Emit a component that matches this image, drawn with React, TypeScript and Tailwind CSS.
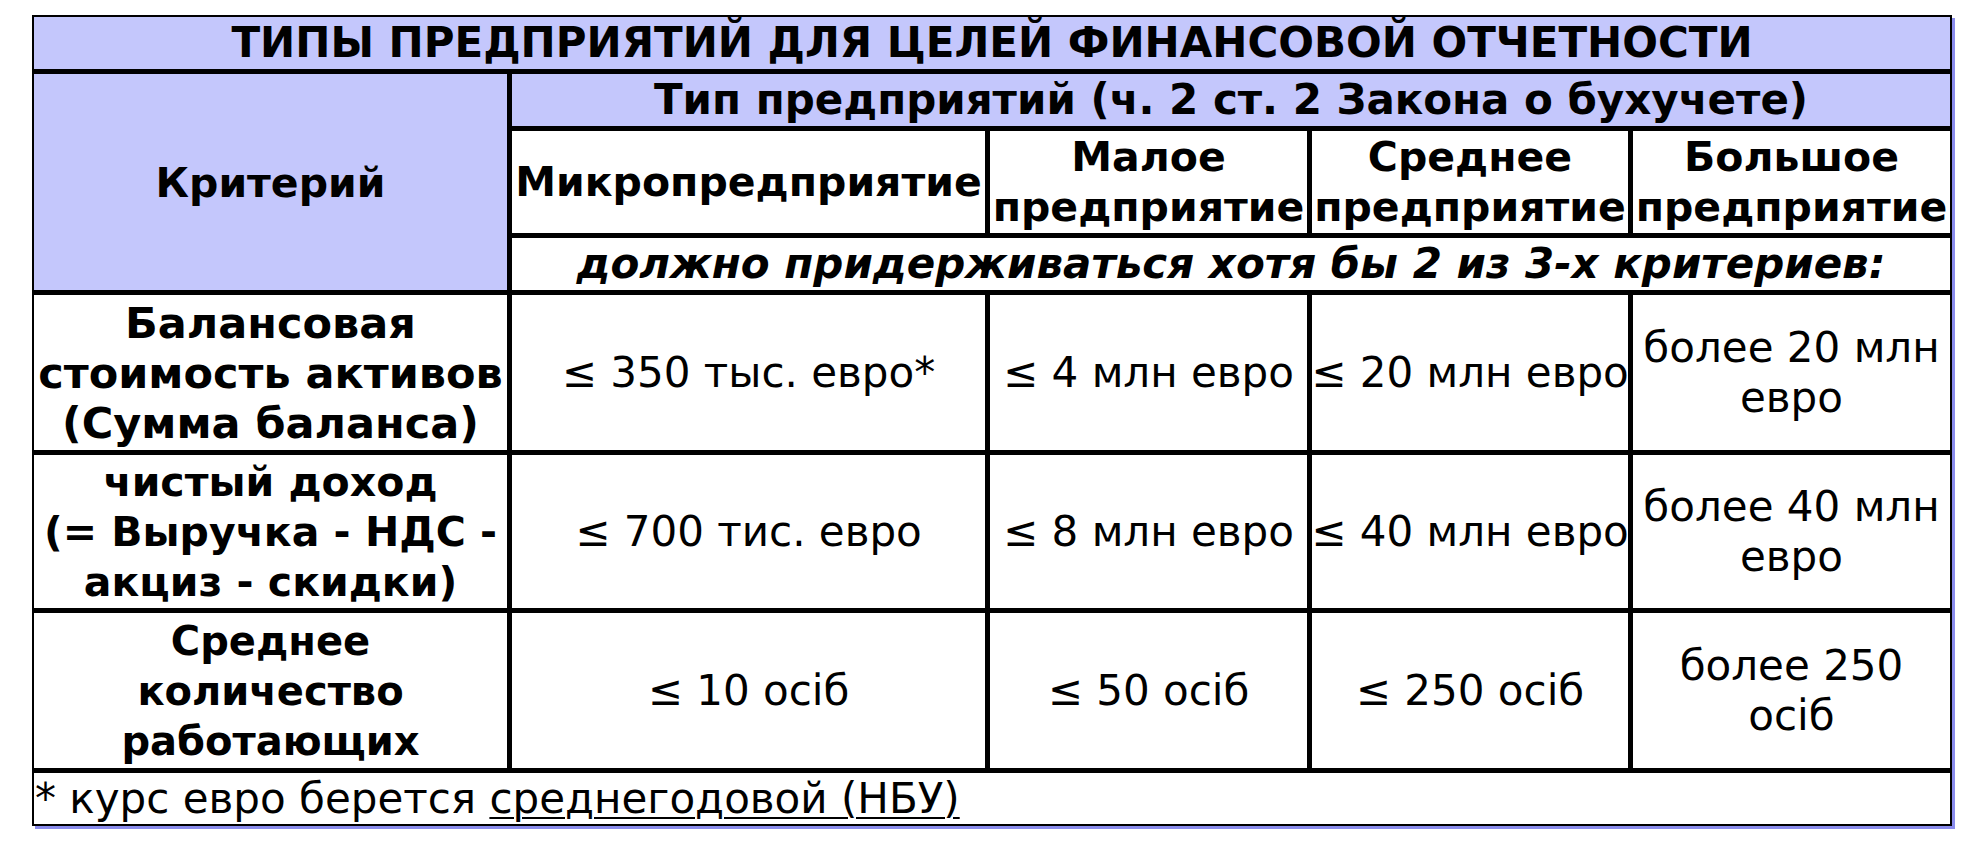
const cell = 'flex items-center justify-center text-center'
const head = 'bg-[#c4c7fc] font-bold'

const rows = [
  {
    size: 'text-[43px]',
    label: ['Балансовая', 'стоимость активов', '(Сумма баланса)'],
    values: [['≤ 350 тыс. евро*'], ['≤ 4 млн евро'], ['≤ 20 млн евро'], ['более 20 млн', 'евро']],
  },
  {
    size: 'text-[41px]',
    label: ['чистый доход', '(= Выручка - НДС -', 'акциз - скидки)'],
    values: [['≤ 700 тис. евро'], ['≤ 8 млн евро'], ['≤ 40 млн евро'], ['более 40 млн', 'евро']],
  },
  {
    size: 'text-[40px]',
    label: ['Среднее', 'количество', 'работающих'],
    values: [['≤ 10 осіб'], ['≤ 50 осіб'], ['≤ 250 осіб'], ['более 250', 'осіб']],
  },
]

const types = [['Микропредприятие'], ['Малое', 'предприятие'], ['Среднее', 'предприятие'], ['Большое', 'предприятие']]

function Lines({ lines }: Readonly<{ lines: string[] }>) {
  return (
    <div>
      {lines.map((line) => (
        <div key={line} className="whitespace-nowrap">
          {line}
        </div>
      ))}
    </div>
  )
}

export default function App() {
  return (
    <div className="min-h-[850px] bg-white pl-[32px] pt-[15px] font-['DejaVu_Sans',sans-serif] text-black">
      <div className="grid w-[1920px] grid-cols-[473px_473px_317px_316px_317px] grid-rows-[52px_52px_102px_52px_155px_153px_155px_51px] gap-[5px] bg-black p-[2px] shadow-[3px_3px_0_#8a8cec]">
        <div className={`${cell} ${head} col-span-5 text-[42px] leading-none`}>
          ТИПЫ ПРЕДПРИЯТИЙ ДЛЯ ЦЕЛЕЙ ФИНАНСОВОЙ ОТЧЕТНОСТИ
        </div>

        <div className={`${cell} ${head} row-span-3 pt-[4px] text-[41px]`}>Критерий</div>
        <div className={`${cell} ${head} col-span-4 text-[42px] leading-none`}>
          Тип предприятий (ч. 2 ст. 2 Закона о бухучете)
        </div>

        {types.map((t) => (
          <div key={t.join(' ')} className={`${cell} overflow-hidden bg-white text-[41px] font-bold leading-[50px]`}>
            <Lines lines={t} />
          </div>
        ))}

        <div className={`${cell} col-span-4 bg-white text-[42px] font-bold italic leading-none`}>
          должно придерживаться хотя бы 2 из 3-х критериев:
        </div>

        {rows.map((r) => (
          <>
            <div key={r.label[0]} className={`${cell} bg-white ${r.size} font-bold leading-[50px]`}>
              <Lines lines={r.label} />
            </div>
            {r.values.map((v, i) => (
              <div key={r.label[0] + i} className={`${cell} bg-white text-[42px] leading-[50px]`}>
                <Lines lines={v} />
              </div>
            ))}
          </>
        ))}

        <div className="col-span-5 flex items-center bg-white pl-[1px] text-[42px] leading-none">
          <span>
            * курс евро берется <span className="underline decoration-2 underline-offset-4">среднегодовой (НБУ)</span>
          </span>
        </div>
      </div>
    </div>
  )
}
